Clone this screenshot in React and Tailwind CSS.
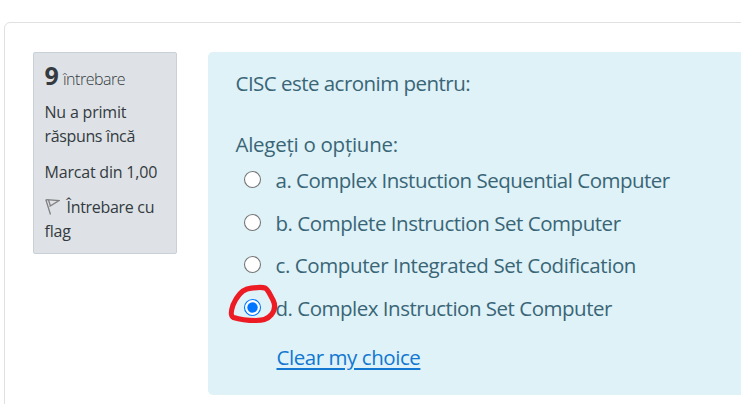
import React from 'react';

const options = [
  { id: 'a', text: 'a. Complex Instuction Sequential Computer', row: 'mb-[13px] tracking-[-0.505px]' },
  { id: 'b', text: 'b. Complete Instruction Set Computer', row: 'mb-[12px] tracking-[-0.46px]' },
  { id: 'c', text: 'c. Computer Integrated Set Codification', row: 'mb-[13px] tracking-[-0.4px]' },
  { id: 'd', text: 'd. Complex Instruction Set Computer', row: 'tracking-[-0.49px]', checked: true },
];

function Radio({ checked }) {
  return (
    <svg className="mt-[5px] h-[19px] w-[19px] shrink-0" viewBox="0 0 19 19">
      <circle cx="9.5" cy="9.5" r="8" fill="#fff" stroke={checked ? '#0075ff' : '#767676'} strokeWidth="1.1" />
      {checked && <circle cx="9.5" cy="9.5" r="5.2" fill="#0075ff" />}
    </svg>
  );
}

function MarkerRing() {
  return (
    <svg className="absolute -left-[18px] -top-[13px] h-[50px] w-[60px]" viewBox="0 0 60 50">
      <path
        d="M22 9 C28 7.500 37 7 40 8 C43 9 45 15 48 20 C51 26 50 30 46.500 34.500 C42 40 37 40.500 31 40.500 C23 40.500 13 39 8.500 37.500 C5 36 6 31 8 25 C11 18 16 11 22 9 Z"
        fill="none"
        stroke="#ed1c24"
        strokeWidth="5.2"
        strokeLinejoin="round"
      />
    </svg>
  );
}

function InfoPanel() {
  return (
    <aside className="h-[202px] w-[144px] shrink-0 whitespace-nowrap rounded-[2px] border border-[#cad0d7] bg-[#dee2e6] pl-[10.5px] pt-[10px] text-[16px] leading-[24px] text-[#343a40]">
      <h3 className="mb-[13px] flex h-[24px] items-baseline">
        <span className="w-[18.5px] text-[25px] font-bold leading-[24px]">9</span>
        <span className="text-[16px] font-light tracking-[-0.5px]">întrebare</span>
      </h3>
      <p className="tracking-[-0.2px]">Nu a primit</p>
      <p className="mb-[12px] tracking-[-0.35px]">răspuns încă</p>
      <p className="mb-[11px] tracking-[-0.2px]">Marcat din 1,00</p>
      <div className="flex">
        <svg className="mr-[7px] mt-[3px] h-[18px] w-[15px]" viewBox="0 0 15 18" fill="none" stroke="#808080" strokeWidth="1.3">
          <path d="M.8 1.500 L5.500 16.500 M1.500 1.700 L14 2.500 L4.500 8.500 M3.500 2 L5.300 7.500" />
        </svg>
        <span className="tracking-[-0.3px]">Întrebare cu</span>
      </div>
      <p className="tracking-[-0.2px]">flag</p>
    </aside>
  );
}

export default function App() {
  return (
    <div className="h-[404px] w-[741px] overflow-hidden bg-white pl-[4px] pt-[22px] font-['Open_Sans','Noto_Sans',sans-serif]">
      <main className="flex h-[400px] w-[760px] gap-[31px] rounded-[6px] border border-[#dee0e2] pl-[28px] pt-[29px]">
        <InfoPanel />
        <section className="h-[343px] w-[560px] shrink-0 whitespace-nowrap rounded-[5px] bg-[#def2f8] pl-[27.5px] pt-[16px] text-[20.5px] leading-[30px] text-[#3a6576]">
          <p className="mb-[31px] tracking-[-0.53px]">CISC este acronim pentru:</p>
          <p className="mb-[6px] tracking-[-0.27px]">Alegeți o opțiune:</p>
          <div className="pl-[7.5px]">
            {options.map((o) => (
              <div key={o.id} className={`flex h-[30px] ${o.row}`}>
                <div className="relative mr-[13.5px]">
                  <Radio checked={o.checked} />
                  {o.checked && <MarkerRing />}
                </div>
                <span>{o.text}</span>
              </div>
            ))}
          </div>
          <a href="#" className="ml-[41px] mt-[19px] block w-fit tracking-[-0.44px] text-[#1177d1] underline decoration-2 underline-offset-[3px]">
            Clear my choice
          </a>
        </section>
      </main>
    </div>
  );
}
